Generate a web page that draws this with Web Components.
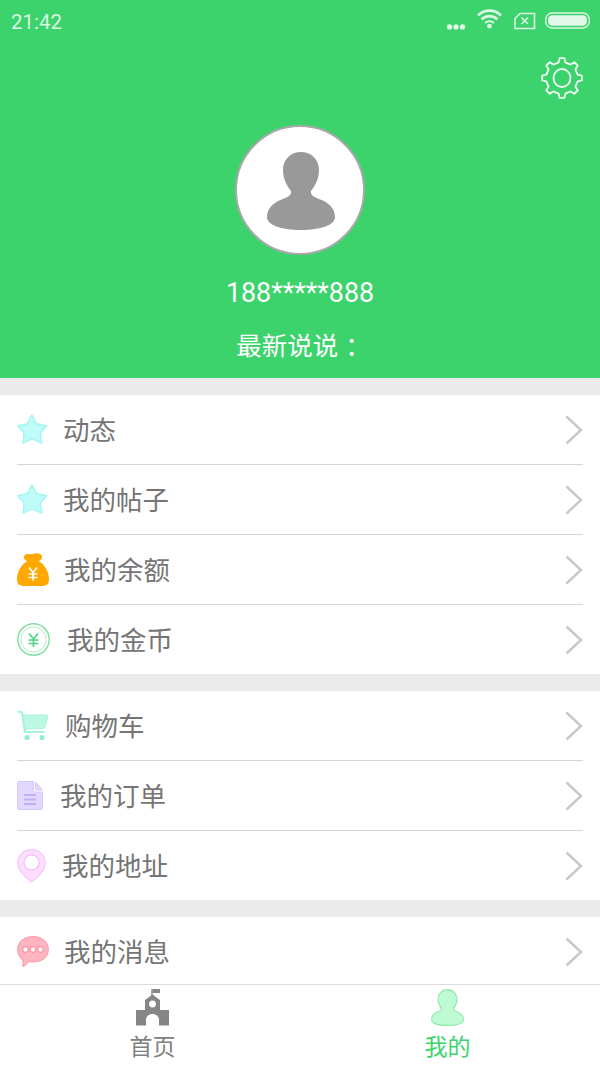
<!DOCTYPE html>
<html lang="zh">
<head>
<meta charset="utf-8">
<title>我的</title>
<style>
    html, body { margin: 0; height: 100%; }
    body { font-family: "Noto Sans CJK SC", "Noto Sans", sans-serif; }
</style>
</head>
<body>
<app-page>
    <profile-header phone="188*****888" motto="最新说说："></profile-header>
    <menu-group>
        <menu-row><app-icon slot="icon" name="star"></app-icon>动态</menu-row>
        <menu-row><app-icon slot="icon" name="star"></app-icon>我的帖子</menu-row>
        <menu-row><app-icon slot="icon" name="bag"></app-icon>我的余额</menu-row>
        <menu-row><app-icon slot="icon" name="coin"></app-icon>我的金币</menu-row>
    </menu-group>
    <menu-group>
        <menu-row><app-icon slot="icon" name="cart"></app-icon>购物车</menu-row>
        <menu-row><app-icon slot="icon" name="doc"></app-icon>我的订单</menu-row>
        <menu-row><app-icon slot="icon" name="pin"></app-icon>我的地址</menu-row>
    </menu-group>
    <menu-group>
        <menu-row><app-icon slot="icon" name="msg"></app-icon>我的消息</menu-row>
    </menu-group>
    <tab-bar slot="footer">
        <tab-item><app-icon slot="icon" name="home"></app-icon>首页</tab-item>
        <tab-item active><app-icon slot="icon" name="me"></app-icon>我的</tab-item>
    </tab-bar>
</app-page>

<script>
// gear outline, 8 teeth, one pointing straight up
function gearPath(cx, cy, outer, inner) {
    let d = ""
    for (let i = 0; i < 8; i++) {
        const a = -90 + i * 45
        const pts = [[a - 12, inner], [a - 7, outer], [a + 7, outer], [a + 12, inner]]
        pts.forEach(([deg, r], j) => {
            const x = (cx + r * Math.cos(deg * Math.PI / 180)).toFixed(2)
            const y = (cy + r * Math.sin(deg * Math.PI / 180)).toFixed(2)
            d += (i === 0 && j === 0 ? "M" : "L") + x + " " + y + " "
        })
    }
    return d + "Z"
}

// width, height, drawing, and the width the icon takes up in its row
const ICONS = {
    star: [31, 31, `<path d="M14.8 .8 L19.6 9.8 L29.6 11.8 L23.4 19 L24.8 29 L15 24.8 L6.2 29 L7 19 L.8 11.8 L10.4 9.8Z" fill="#bffbf8" stroke="#a6f5f1" stroke-width="1.4" stroke-linejoin="round"/>`, 30],
    bag: [32, 33, `<path d="M7.5 2.5 C9.5 .2 12 1.2 14 1.2 C16.5 1.2 18.5 -.2 21.5 .5 C25 1.3 26 4.2 24.5 6 C23.6 7 22.6 7.6 21.8 8.2 C27 11 32 18 32 26 C32 31 29.5 33 25 33 L7 33 C2.5 33 0 31 0 26 C0 18 5 11 10.2 8.2 C8 7 5.5 5 7.5 2.5Z" fill="#ffa800"/>
        <path d="M12 14.5 L16 19.5 L20 14.5 M16 19.5 V27.5 M11.5 21 H20.5 M11.5 24.5 H20.5" fill="none" stroke="#fff" stroke-width="1.7"/>`, 31],
    coin: [33, 33, `<circle cx="16.5" cy="16.5" r="15.7" fill="#fff" stroke="#86e0a5" stroke-width="1.5"/>
        <circle cx="16.5" cy="16.5" r="12.6" fill="#fff" stroke="#b4eec8" stroke-width="1"/>
        <path d="M12 10.5 L16.5 16 L21 10.5 M16.5 16 V24 M11.5 17 H21.5 M11.5 20.5 H21.5" fill="none" stroke="#4fd681" stroke-width="1.7"/>`, 34],
    cart: [31, 31, `<path d="M1.5 1.5 L5 2.5 L8 22 H27" fill="none" stroke="#a6f3d5" stroke-width="2.2" stroke-linecap="round" stroke-linejoin="round"/>
        <path d="M5.5 5 H29 C30.5 5 31 6 30.7 7.2 L28 17 C27.7 18 27 18.5 26 18.5 L8 19Z" fill="#bdf9e2" stroke="#a6f3d5" stroke-width="1"/>
        <circle cx="10" cy="27.5" r="2.6" fill="#94eec9"/><circle cx="25" cy="27.5" r="2.6" fill="#94eec9"/>`, 32],
    doc: [26, 29, `<path d="M2 .5 H16.5 V8.5 C16.5 10 17.5 11 19 11 H25.5 V27 C25.5 28 25 28.5 24 28.5 H2 C1 28.5 .5 28 .5 27 V2 C.5 1 1 .5 2 .5Z" fill="#e2d7ff" stroke="#d6c8ff" stroke-width="1"/>
        <path d="M18.5 1 L25.5 9 H19.5 C18.8 9 18.5 8.6 18.5 8Z" fill="#e2d7ff" stroke="#d6c8ff" stroke-width="1" stroke-linejoin="round"/>
        <path d="M7 14 H19 M7 18.5 H19 M7 23 H19" stroke="#c4aff7" stroke-width="1.8" fill="none"/>`, 27],
    pin: [29, 34, `<path d="M14.5 .7 C22.5 .7 28.3 6.8 28.3 14 C28.3 22 20 29 14.5 33.3 C9 29 .7 22 .7 14 C.7 6.8 6.5 .7 14.5 .7Z" fill="#fcdeff" stroke="#f7c6ff" stroke-width="1.2"/>
        <circle cx="14.5" cy="13.5" r="7.6" fill="#fff" stroke="#f3b9fb" stroke-width="1.2"/>`, 29],
    msg: [32, 31, `<path d="M16 .7 C25 .7 31.3 6.5 31.3 13.5 C31.3 20.5 25 26 16 26 C14.5 26 13 25.8 11.5 25.5 C10 27.5 8 30 6 30.5 C6.3 28 6.3 25.5 5.5 23.5 C2.5 21 .7 17.5 .7 13.5 C.7 6.5 7 .7 16 .7Z" fill="#ffb5c1" stroke="#ff9cad" stroke-width="1.2"/>
        <g fill="#fff" stroke="#ff8ea3" stroke-width="1.2"><circle cx="8.5" cy="13.5" r="2.8"/><circle cx="16" cy="13.5" r="2.8"/><circle cx="23.5" cy="13.5" r="2.8"/></g>`, 31],
    home: [33, 37, `<path d="M16 0 V9" stroke="#868686" stroke-width="1.4"/><path d="M16.5 0 H24 V4 H16.5Z" fill="#868686"/>
        <path d="M16.5 5.5 L24 11 V21 H33 V36.5 H23 V31 C23 27.5 20 25 16.5 25 C13 25 10 27.5 10 31 V36.5 H0 V21 H9 V11Z" fill="#868686"/>
        <circle cx="16.5" cy="15" r="3.4" fill="#fff"/>`, 33],
    me: [33, 37, `<path d="M16.5 .6 C22 .6 26 5 26 10.5 C26 14.5 24 17.5 22.3 19.5 C22.3 21 24 21.8 26 22.8 C30 24.5 32.4 27 32.4 30.2 C32.4 34.5 27 36.4 16.5 36.4 C6 36.4 .6 34.5 .6 30.2 C.6 27 3 24.5 7 22.8 C9 21.8 10.7 21 10.7 19.5 C9 17.5 7 14.5 7 10.5 C7 5 11 .6 16.5 .6Z" fill="#bffbd2" stroke="#94e9ae" stroke-width="1.2"/>`, 33]
}

class AppIcon extends HTMLElement {
    constructor() {
        super()
        this.attachShadow({mode: "open"})
    }
    connectedCallback() {
        const [w, h, body, box] = ICONS[this.getAttribute("name")]
        this.shadowRoot.innerHTML = `
            <style>
                :host { display: block; width: ${box}px; height: ${h}px; flex: none; }
                svg { display: block; overflow: visible; }
            </style>
            <svg width="${w}" height="${h}" viewBox="0 0 ${w} ${h}">${body}</svg>`
    }
}
customElements.define("app-icon", AppIcon)

class AppPage extends HTMLElement {
    constructor() {
        super()
        this.attachShadow({mode: "open"})
        this.shadowRoot.innerHTML = `
            <style>
                :host { display: flex; flex-direction: column; height: 1067px; overflow: hidden; background: #fff; }
                main { flex: 1; min-height: 0; overflow: hidden; }
                footer { flex: none; }
            </style>
            <main><slot></slot></main>
            <footer><slot name="footer"></slot></footer>`
    }
}
customElements.define("app-page", AppPage)

class StatusBar extends HTMLElement {
    constructor() {
        super()
        this.attachShadow({mode: "open"})
        this.shadowRoot.innerHTML = `
            <style>
                :host {
                    display: flex; align-items: center; height: 44px; padding: 0 10px 0 11px;
                    color: rgba(255, 255, 255, 0.82);
                    font: 20.5px Roboto, sans-serif;
                }
                span { flex: 1; }
                svg { display: block; flex: none; }
            </style>
            <span>21:42</span>
            <svg width="143" height="44" viewBox="447 0 143 44" fill="none" stroke="rgba(255,255,255,.82)">
                <g fill="rgba(255,255,255,.82)" stroke="none">
                    <circle cx="449.5" cy="27" r="2.7"/><circle cx="456" cy="27" r="2.7"/><circle cx="462.5" cy="27" r="2.7"/>
                    <circle cx="489.5" cy="26.2" r="2.4"/>
                </g>
                <path d="M478 15.5 C484.5 9 494.5 9 501 15.5 M481.5 19.5 C486 15 493 15 497.5 19.5" stroke-width="2.6"/>
                <path d="M485 23 C487.5 20.8 491.5 20.8 494 23" stroke-width="2"/>
                <path d="M520 13.5 H534.5 V28.5 H515 V18.5Z" stroke-width="1.6"/>
                <path d="M521.5 17.5 L528 24 M528 17.5 L521.5 24" stroke-width="1.6"/>
                <rect x="545.7" y="13" width="43.6" height="15" rx="6.5" stroke-width="1.4"/>
                <rect x="548" y="15.2" width="39" height="10.6" rx="4.5" fill="rgba(255,255,255,.85)" stroke="none"/>
            </svg>`
    }
}
customElements.define("status-bar", StatusBar)

class ProfileHeader extends HTMLElement {
    constructor() {
        super()
        this.attachShadow({mode: "open"})
    }
    connectedCallback() {
        const motto = this.getAttribute("motto").replace("：", `<span id="colon">：</span>`)
        this.shadowRoot.innerHTML = `
            <style>
                :host {
                    display: flex; flex-direction: column; align-items: center;
                    height: 378px; background: #3cd36c; color: #fff;
                }
                status-bar { align-self: stretch; flex: none; }
                #gear { align-self: flex-end; display: block; flex: none; margin: 13px 17px 0 0; }
                #avatar {
                    display: block; flex: none; box-sizing: border-box; width: 130px; height: 130px; margin-top: 26px;
                    border-radius: 50%; background: #fff; border: 2px solid #a8a8a8;
                }
                #avatar svg { display: block; margin: -2px; }
                #phone { flex: none; margin-top: 20px; font: 26.8px/36px Roboto, sans-serif; }
                #motto { flex: none; margin-top: 15px; white-space: nowrap; font: 25.5px/36px "Noto Sans CJK SC", sans-serif; }
                #colon { margin-left: 7px; margin-right: -7px; }
            </style>
            <status-bar></status-bar>
            <svg id="gear" width="42" height="42" viewBox="0 0 42 42" fill="none" stroke="rgba(255,255,255,.92)" stroke-width="1.8" stroke-linejoin="round">
                <path d="${gearPath(21, 21, 20, 16)}"/>
                <ellipse cx="21" cy="21" rx="8.5" ry="9"/>
            </svg>
            <div id="avatar">
                <svg width="130" height="130" viewBox="0 0 130 130">
                    <path fill="#999" d="M66 27 C76 27 84 34 84 45 C84 54 80 61 76 66 C75.500 70 78 71.500 84 74 C93 77 100 83 100 92 C100 100 86 105 66 105 C46 105 32 100 32 92 C32 83 39 77 48 74 C54 71.500 56.500 70 56 66 C52 61 48 54 48 45 C48 34 56 27 66 27Z"/>
                </svg>
            </div>
            <div id="phone">${this.getAttribute("phone")}</div>
            <div id="motto">${motto}</div>`
    }
}
customElements.define("profile-header", ProfileHeader)

class MenuGroup extends HTMLElement {
    constructor() {
        super()
        this.attachShadow({mode: "open"})
        this.shadowRoot.innerHTML = `
            <style>
                :host { display: block; border-top: 17px solid #ebebeb; background: #fff; }
                ::slotted(menu-row:not(:last-child)) { border-bottom: 1px solid #d6d6d6; }
            </style>
            <slot></slot>`
    }
}
customElements.define("menu-group", MenuGroup)

class MenuRow extends HTMLElement {
    constructor() {
        super()
        this.attachShadow({mode: "open"})
        this.shadowRoot.innerHTML = `
            <style>
                :host {
                    display: flex; align-items: center; gap: 16px;
                    height: 69px; margin: 0 17px;
                    color: #757575;
                    font: 26.5px "Noto Sans CJK SC", sans-serif;
                }
                span { flex: 1; padding-bottom: 2px; }
                svg { display: block; flex: none; }
            </style>
            <slot name="icon"></slot>
            <span><slot></slot></span>
            <svg width="18" height="30" viewBox="0 0 18 30" fill="none" stroke="#c8c8c8" stroke-width="2.4">
                <path d="M1.5 1.5 L16 15 L1.5 28.5"/>
            </svg>`
    }
}
customElements.define("menu-row", MenuRow)

class TabBar extends HTMLElement {
    constructor() {
        super()
        this.attachShadow({mode: "open"})
        this.shadowRoot.innerHTML = `
            <style>
                :host {
                    display: grid; grid-template-columns: 1fr 1fr;
                    height: 82px; padding: 0 5px;
                    border-top: 1px solid #dcdcdc; background: #fff;
                }
            </style>
            <slot></slot>`
    }
}
customElements.define("tab-bar", TabBar)

class TabItem extends HTMLElement {
    constructor() {
        super()
        this.attachShadow({mode: "open"})
        this.shadowRoot.innerHTML = `
            <style>
                :host {
                    display: flex; flex-direction: column; align-items: center;
                    padding-top: 4px; color: #808080;
                    font: 23px/30px "Noto Sans CJK SC", sans-serif;
                }
                :host([active]) { color: #3cd36c; }
                span { margin-top: 4px; }
            </style>
            <slot name="icon"></slot>
            <span><slot></slot></span>`
    }
}
customElements.define("tab-item", TabItem)
</script>
</body>
</html>
